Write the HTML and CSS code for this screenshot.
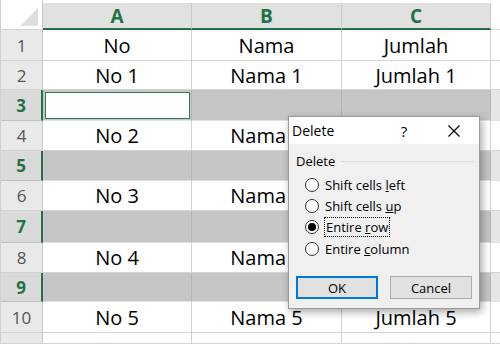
FILE: index.html
```html
<!DOCTYPE html>
<html lang="en">
<head>
    <meta charset="UTF-8">
    <link rel="stylesheet" href="styles.css">
    <title>Delete rows</title>
</head>
<body>
    <div class="sheet">
        <div class="corner"><span class="corner-tri"></span></div>
        <div class="col-head">A</div>
        <div class="col-head">B</div>
        <div class="col-head">C</div>
        <div class="col-tail"></div>

        <div class="row-head">1</div>
        <div class="cell">No</div>
        <div class="cell">Nama</div>
        <div class="cell">Jumlah</div>
        <div class="cell tail"></div>

        <div class="row-head">2</div>
        <div class="cell">No 1</div>
        <div class="cell">Nama 1</div>
        <div class="cell">Jumlah 1</div>
        <div class="cell tail"></div>

        <div class="row-head sel">3</div>
        <div class="cell sel"><div class="active"></div></div>
        <div class="cell sel"></div>
        <div class="cell sel"></div>
        <div class="cell tail sel"></div>

        <div class="row-head">4</div>
        <div class="cell">No 2</div>
        <div class="cell">Nama 2</div>
        <div class="cell">Jumlah 2</div>
        <div class="cell tail"></div>

        <div class="row-head sel">5</div>
        <div class="cell sel"></div>
        <div class="cell sel"></div>
        <div class="cell sel"></div>
        <div class="cell tail sel"></div>

        <div class="row-head">6</div>
        <div class="cell">No 3</div>
        <div class="cell">Nama 3</div>
        <div class="cell">Jumlah 3</div>
        <div class="cell tail"></div>

        <div class="row-head sel">7</div>
        <div class="cell sel"></div>
        <div class="cell sel"></div>
        <div class="cell sel"></div>
        <div class="cell tail sel"></div>

        <div class="row-head">8</div>
        <div class="cell">No 4</div>
        <div class="cell">Nama 4</div>
        <div class="cell">Jumlah 4</div>
        <div class="cell tail"></div>

        <div class="row-head sel">9</div>
        <div class="cell sel"></div>
        <div class="cell sel"></div>
        <div class="cell sel"></div>
        <div class="cell tail sel"></div>

        <div class="row-head">10</div>
        <div class="cell">No 5</div>
        <div class="cell">Nama 5</div>
        <div class="cell">Jumlah 5</div>
        <div class="cell tail"></div>

        <div class="row-head"></div>
        <div class="cell"></div>
        <div class="cell"></div>
        <div class="cell"></div>
        <div class="cell tail"></div>
    </div>

    <div class="dialog">
        <div class="dialog-title">
            <span class="title-text">Delete</span>
            <span class="title-help">?</span>
            <span class="title-close">
                <svg width="12" height="12" viewBox="0 0 12 12">
                    <path d="M0.5 0.5 L11.5 11.5 M11.5 0.5 L0.5 11.5" stroke="#000" stroke-width="1.2" fill="none"/>
                </svg>
            </span>
        </div>
        <div class="dialog-body">
            <div class="group-label">
                <span>Delete</span>
                <span class="group-line"></span>
            </div>
            <div class="options">
                <div class="option"><span class="radio"></span><span>Shift cells <u>l</u>eft</span></div>
                <div class="option"><span class="radio"></span><span>Shift cells <u>u</u>p</span></div>
                <div class="option"><span class="radio checked"></span><span class="focus">Entire <u>r</u>ow</span></div>
                <div class="option"><span class="radio"></span><span>Entire <u>c</u>olumn</span></div>
            </div>
            <div class="buttons">
                <button class="btn default">OK</button>
                <button class="btn">Cancel</button>
            </div>
        </div>
    </div>
</body>
</html>
```

FILE: styles.css
```css
body {
    margin: 0;
    background-color: white;
    font-family: 'Open Sans', 'Noto Sans', sans-serif;
    width: 500px;
    height: 344px;
    overflow: hidden;
    position: relative;
}

.sheet {
    display: grid;
    grid-template-columns: 42px 149px 150px 149px 1fr;
    grid-template-rows: 27px 31px 29px 31px 30px 30px 30px 32px 30px 29px 31px 11px;
    padding-top: 3px;
    border-left: 1px solid #d0d0d0;
}

.corner {
    background-color: white;
    border-bottom: 1px solid #d4d4d4;
    border-right: 1px solid #c8c8c8;
    position: relative;
    margin-top: -3px;
}

.corner-tri {
    position: absolute;
    right: 4px;
    bottom: 3px;
    width: 0;
    height: 0;
    border-left: 18px solid transparent;
    border-bottom: 18px solid #dedede;
}

.col-head {
    background-color: #e1e1e1;
    color: #217346;
    font-weight: bold;
    font-size: 19px;
    display: flex;
    align-items: center;
    justify-content: center;
    border-right: 1px solid #c8c8c8;
    border-bottom: 2px solid #217346;
}

.col-tail {
    border-bottom: 1px solid #d4d4d4;
    margin-top: -3px;
}

.row-head {
    background-color: #e9e9e9;
    color: #555;
    font-size: 17px;
    display: flex;
    align-items: center;
    justify-content: center;
    border-right: 1px solid #c8c8c8;
    border-bottom: 1px solid #d4d4d4;
}

.row-head.sel {
    background-color: #dadada;
    color: #217346;
    font-weight: bold;
    border-right: 2px solid #217346;
    border-bottom-color: #c0c0c0;
}

.cell {
    font-size: 20px;
    color: #000;
    display: flex;
    align-items: center;
    justify-content: center;
    border-right: 1px solid #d4d4d4;
    border-bottom: 1px solid #d4d4d4;
}

.cell.sel {
    background-color: #c6c6c6;
    border-right-color: #b4b4b4;
    border-bottom-color: #e2e2e2;
}

.cell.tail {
    border-right: none;
}

.cell.tail.sel {
    background-color: #e6e6e6;
}

.active {
    align-self: stretch;
    flex: 1;
    margin: 2px 1px 1px 2px;
    background-color: white;
    border: 1px solid #2f7d4f;
}

/* Delete dialog over the sheet */
.dialog {
    position: absolute;
    left: 288px;
    top: 116px;
    width: 192px;
    height: 193px;
    box-sizing: border-box;
    border: 1px solid #9a9a9a;
    background-color: #f0f0f0;
    box-shadow: 2px 3px 8px rgba(0, 0, 0, 0.35);
    font-size: 13px;
    color: #000;
    display: flex;
    flex-direction: column;
}

.dialog-title {
    height: 27px;
    background-color: white;
    display: flex;
    align-items: center;
    padding-left: 3px;
    font-size: 14px;
}

.title-help {
    margin-left: auto;
    width: 20px;
    text-align: center;
    margin-right: 30px;
    font-size: 15px;
}

.title-close {
    width: 20px;
    display: flex;
    justify-content: center;
    margin-right: 15px;
}

.dialog-body {
    padding: 8px 5px 0 7px;
    display: flex;
    flex-direction: column;
}

.group-label {
    display: flex;
    align-items: center;
    gap: 6px;
    height: 18px;
}

.group-line {
    flex: 1;
    height: 1px;
    background-color: #dcdcdc;
}

.options {
    display: flex;
    flex-direction: column;
    margin-top: 4px;
    padding-left: 9px;
}

.option {
    display: flex;
    align-items: center;
    height: 21.3px;
    gap: 6px;
}

.radio {
    width: 14px;
    height: 14px;
    box-sizing: border-box;
    border: 1px solid #333;
    border-radius: 50%;
    background-color: white;
    display: flex;
    align-items: center;
    justify-content: center;
}

.radio.checked::after {
    content: '';
    width: 8px;
    height: 8px;
    border-radius: 50%;
    background-color: #000;
}

.focus {
    outline: 1px dotted #000;
    outline-offset: 0;
    padding: 0 1px;
}

.buttons {
    display: flex;
    gap: 12px;
    margin-top: 17px;
}

.btn {
    width: 82px;
    height: 23px;
    box-sizing: border-box;
    background-color: #e1e1e1;
    border: 1px solid #adadad;
    font-family: 'Open Sans', 'Noto Sans', sans-serif;
    font-size: 13px;
    color: #000;
    padding: 0;
}

.btn.default {
    border: 2px solid #0078d7;
}
```
